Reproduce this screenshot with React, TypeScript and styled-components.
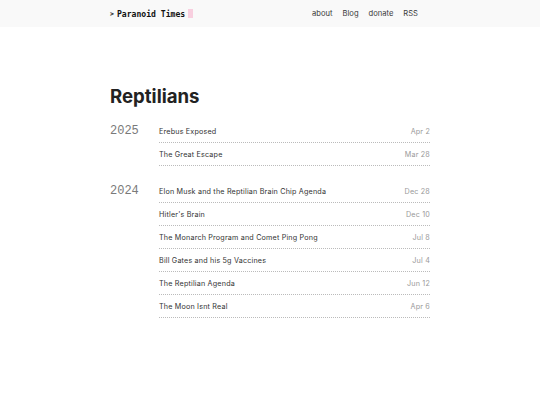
import React from 'react';
import styled, { createGlobalStyle } from 'styled-components';

const GlobalStyle = createGlobalStyle`
    html, body {
        margin: 0;
        padding: 0;
        background: #ffffff;
    }
    body {
        font-family: Inter, "Liberation Sans", sans-serif;
        color: #222;
    }
`;

type Post = { title: string; date: string };
type Year = { year: string; posts: Array<Post> };

const archive: Array<Year> = [
    {
        year: '2025',
        posts: [
            { title: 'Erebus Exposed', date: 'Apr 2' },
            { title: 'The Great Escape', date: 'Mar 28' },
        ],
    },
    {
        year: '2024',
        posts: [
            { title: 'Elon Musk and the Reptilian Brain Chip Agenda', date: 'Dec 28' },
            { title: "Hitler's Brain", date: 'Dec 10' },
            { title: 'The Monarch Program and Comet Ping Pong', date: 'Jul 8' },
            { title: 'Bill Gates and his 5g Vaccines', date: 'Jul 4' },
            { title: 'The Reptilian Agenda', date: 'Jun 12' },
            { title: 'The Moon Isnt Real', date: 'Apr 6' },
        ],
    },
];

const navLinks = ['about', 'Blog', 'donate', 'RSS'];

export default function App() {
    return (
        <Page>
            <GlobalStyle />
            <Header>
                <HeaderInner>
                    <Logo>
                        <Prompt>&gt;</Prompt>
                        Paranoid Times
                        <Cursor />
                    </Logo>
                    <Nav>
                        {navLinks.map((link) => (
                            <NavLink key={link}>{link}</NavLink>
                        ))}
                    </Nav>
                </HeaderInner>
            </Header>
            <Main>
                <Title>Reptilians</Title>
                {archive.map((group) => (
                    <YearGroup key={group.year}>
                        <YearLabel>{group.year}</YearLabel>
                        <PostList>
                            {group.posts.map((post) => (
                                <PostRow key={post.title}>
                                    <PostTitle>{post.title}</PostTitle>
                                    <PostDate>{post.date}</PostDate>
                                </PostRow>
                            ))}
                        </PostList>
                    </YearGroup>
                ))}
            </Main>
        </Page>
    );
}

const Page = styled.div`
    min-height: 405px;
`;

const Header = styled.header`
    background: #f9f9f9;
    height: 27px;
`;

const HeaderInner = styled.div`
    width: 320px;
    margin: 0 auto;
    height: 100%;
    display: flex;
    align-items: center;
    justify-content: space-between;
    padding-right: 12px;
    box-sizing: border-box;
`;

const Logo = styled.div`
    font-family: "DejaVu Sans Mono", "Liberation Mono", monospace;
    font-weight: bold;
    font-size: 8.1px;
    color: #111;
    display: flex;
    align-items: center;
`;

const Prompt = styled.span`
    margin-right: 3px;
    font-size: 6.5px;
`;

const Cursor = styled.span`
    display: inline-block;
    width: 5px;
    height: 9px;
    background: #f8cfdf;
    margin-left: 3px;
`;

const Nav = styled.nav`
    display: flex;
    gap: 10px;
`;

const NavLink = styled.a`
    font-size: 7.6px;
    color: #3a3a3a;
    text-decoration: none;
`;

const Main = styled.main`
    width: 320px;
    margin: 0 auto;
    padding-top: 57px;
`;

const Title = styled.h1`
    font-size: 18.6px;
    font-weight: 700;
    color: #222;
    margin: 0 0 16px;
    line-height: 24px;
`;

const YearGroup = styled.section`
    display: flex;
    margin-bottom: 18px;
`;

const YearLabel = styled.div`
    width: 49px;
    flex-shrink: 0;
    font-family: "Liberation Mono", "DejaVu Sans Mono", monospace;
    font-size: 12px;
    color: #7a7a7a;
    line-height: 14px;
`;

const PostList = styled.ul`
    flex: 1;
    list-style: none;
    margin: 0;
    padding: 0;
`;

const PostRow = styled.li`
    display: flex;
    justify-content: space-between;
    align-items: center;
    height: 22px;
    border-bottom: 1px dotted #bbb;
    &:first-child {
        margin-top: -4px;
    }
`;

const PostTitle = styled.span`
    font-size: 7.2px;
    color: #333;
    letter-spacing: 0.18px;
`;

const PostDate = styled.span`
    font-size: 7.2px;
    color: #999;
    letter-spacing: 0.18px;
`;
